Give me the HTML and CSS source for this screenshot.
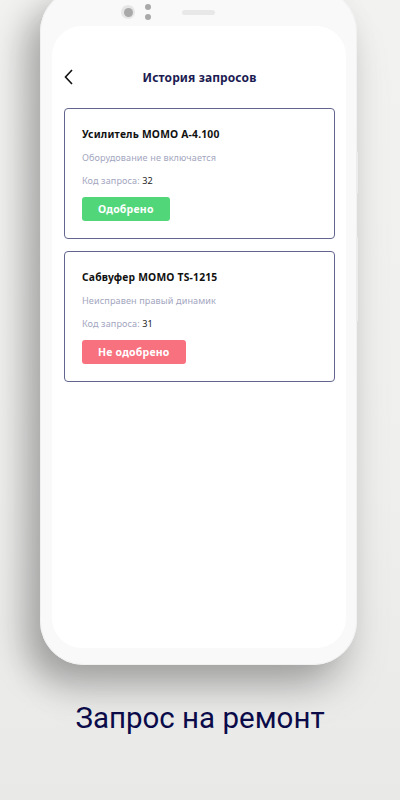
FILE: index.html
```html
<!DOCTYPE html>
<html lang="ru">
<head>
  <meta charset="UTF-8">
  <title>Запрос на ремонт</title>
  <link rel="stylesheet" href="styles.css">
</head>
<body>
  <div class="stage">
    <div class="phone">
      <div class="phone-top">
        <span class="camera"><span class="lens"></span></span>
        <span class="sensors"><i></i><i></i></span>
        <span class="speaker"></span>
      </div>

      <div class="screen">
        <div class="header">
          <svg class="back" width="10" height="16" viewBox="0 0 10 16">
            <path d="M8 1 L1.5 8 L8 15" fill="none" stroke="#111" stroke-width="1.6"/>
          </svg>
          <h1>История запросов</h1>
        </div>

        <div class="card">
          <div class="card-title">Усилитель MOMO A-4.100</div>
          <div class="card-desc">Оборудование не включается</div>
          <div class="card-code">Код запроса: <span>32</span></div>
          <span class="status approved">Одобрено</span>
        </div>

        <div class="card">
          <div class="card-title">Сабвуфер MOMO TS-1215</div>
          <div class="card-desc">Неисправен правый динамик</div>
          <div class="card-code">Код запроса: <span>31</span></div>
          <span class="status rejected">Не одобрено</span>
        </div>
      </div>

      <span class="side-btn up"></span>
      <span class="side-btn down"></span>
    </div>

    <div class="caption">Запрос на ремонт</div>
  </div>
</body>
</html>
```

FILE: styles.css
```css
* {
  box-sizing: border-box;
}

body {
  margin: 0;
  padding: 0;
  font-family: 'Noto Sans', 'Open Sans', sans-serif;
  background: #efefee;
}

.stage {
  width: 400px;
  height: 800px;
  overflow: hidden;
  background: linear-gradient(to bottom, #f2f2f1 0%, #efefee 60%, #e9e9e8 100%);
}

.phone {
  position: relative;
  width: 317px;
  height: 677px;
  margin: -12px 0 0 40px;
  padding: 0 11px 0 12px;
  background: #f9f9f9;
  border-radius: 44px;
  box-shadow: -16px 16px 34px rgba(0, 0, 0, 0.28), 0 30px 40px rgba(0, 0, 0, 0.08), inset 0 0 0 1px #f1f1f1;
}

.phone-top {
  display: flex;
  align-items: center;
  height: 38px;
  padding: 10px 0 0 69px;
}

.camera {
  display: flex;
  align-items: center;
  justify-content: center;
  width: 14px;
  height: 14px;
  border-radius: 50%;
  background: #e6e6e6;
}

.lens {
  width: 9px;
  height: 9px;
  border-radius: 50%;
  background: #a9a9a9;
}

.sensors {
  display: flex;
  flex-direction: column;
  gap: 4px;
  margin-left: 10px;
}

.sensors i {
  width: 6px;
  height: 6px;
  border-radius: 50%;
  background: #a9a9a9;
}

.speaker {
  width: 33px;
  height: 5px;
  margin-left: 31px;
  border-radius: 3px;
  background: #e8e8e8;
}

.screen {
  height: 622px;
  padding: 0 11px 0 12px;
  background: #fff;
  border-radius: 30px;
}

.header {
  position: relative;
  height: 24px;
  padding-top: 39px;
  box-sizing: content-box;
  display: flex;
  align-items: center;
  justify-content: center;
  margin-bottom: 19px;
}

.back {
  position: absolute;
  left: 0;
  top: 43px;
}

h1 {
  margin: 0;
  font-size: 12px;
  font-weight: 700;
  color: #1b1b52;
  letter-spacing: 0.1px;
}

.card {
  border: 1px solid #62668f;
  border-radius: 4px;
  padding: 17px 17px 17px 17px;
  margin-bottom: 12px;
}

.card-title {
  font-size: 10.3px;
  line-height: 16px;
  font-weight: 700;
  color: #111;
  letter-spacing: 0.2px;
}

.card-desc,
.card-code {
  margin-top: 9px;
  font-size: 9.1px;
  line-height: 14px;
  color: #a3a6c0;
  letter-spacing: 0.1px;
}

.card-code span {
  color: #222;
}

.status {
  display: inline-block;
  margin-top: 9px;
  height: 24px;
  line-height: 24px;
  padding: 0 16px;
  border-radius: 3px;
  font-size: 10.5px;
  font-weight: 700;
  color: #fff;
  letter-spacing: 0.2px;
}

.approved {
  background: #52d67a;
}

.rejected {
  background: #f7717f;
}

.side-btn {
  position: absolute;
  right: -1px;
  width: 2px;
  background: #ececec;
}

.side-btn.up {
  top: 164px;
  height: 41px;
}

.side-btn.down {
  top: 249px;
  height: 84px;
}

.caption {
  margin-top: 35px;
  text-align: center;
  font-family: Roboto, sans-serif;
  font-size: 29.5px;
  line-height: 36px;
  color: #0c0c4a;
}
```
